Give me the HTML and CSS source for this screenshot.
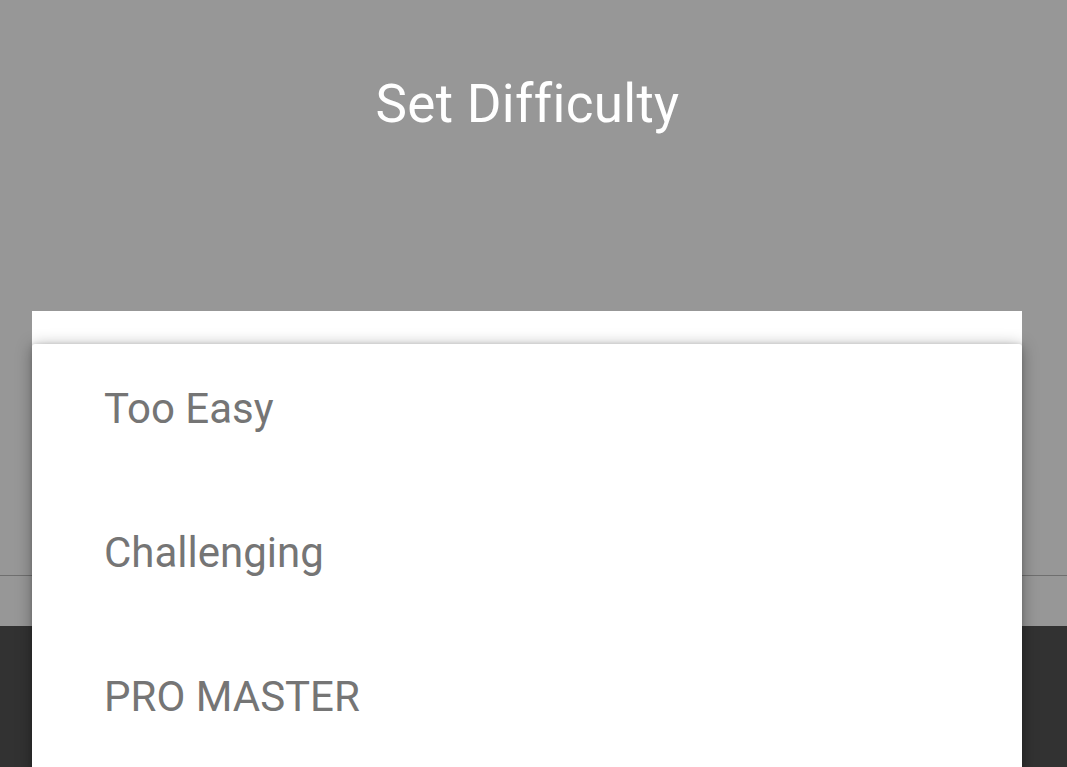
FILE: index.html
```html
<!DOCTYPE html>
<html>
<head>
<meta charset="utf-8">
<link rel="stylesheet" href="styles.css">
</head>
<body>
<div class="screen">
  <header class="header">
    <h1 class="title">Set Difficulty</h1>
  </header>
  <div class="content">
    <div class="card"></div>
  </div>
  <div class="divider"></div>
  <div class="spacer"></div>
  <footer class="footer"></footer>

  <ul class="menu">
    <li class="menu-item">Too Easy</li>
    <li class="menu-item">Challenging</li>
    <li class="menu-item">PRO MASTER</li>
  </ul>
</div>
</body>
</html>
```
FILE: styles.css
```css
* { box-sizing: border-box; }
html, body {
  margin: 0;
  padding: 0;
  width: 1067px;
  height: 767px;
  overflow: hidden;
  font-family: Roboto, "Noto Sans", sans-serif;
}
.screen {
  position: relative;
  width: 1067px;
  height: 767px;
  background: #979797;
  display: flex;
  flex-direction: column;
}
.header {
  height: 311px;
  display: flex;
  justify-content: center;
  padding: 72px 12px 0 0;
}
.title {
  margin: 0;
  font-weight: 400;
  font-size: 53px;
  line-height: 64px;
  letter-spacing: 0.3px;
  color: #ffffff;
}
.content {
  padding: 0 45px 0 32px;
  height: 264px;
}
.card {
  background: #ffffff;
  height: 100%;
}
.divider {
  height: 1px;
  background: #6f6f6f;
}
.spacer {
  height: 50px;
}
.footer {
  flex: 1;
  background: #323232;
}
.menu {
  position: absolute;
  left: 32px;
  top: 344px;
  width: 990px;
  height: 430px;
  margin: 0;
  padding: 0;
  list-style: none;
  background: #ffffff;
  border-radius: 3px;
  box-shadow: 0 2px 16px rgba(0, 0, 0, 0.35), 0 0 4px rgba(0, 0, 0, 0.12);
}
.menu-item {
  height: 144px;
  display: flex;
  align-items: center;
  padding: 0 0 16px 72px;
  font-size: 42px;
  color: #757575;
}
```
